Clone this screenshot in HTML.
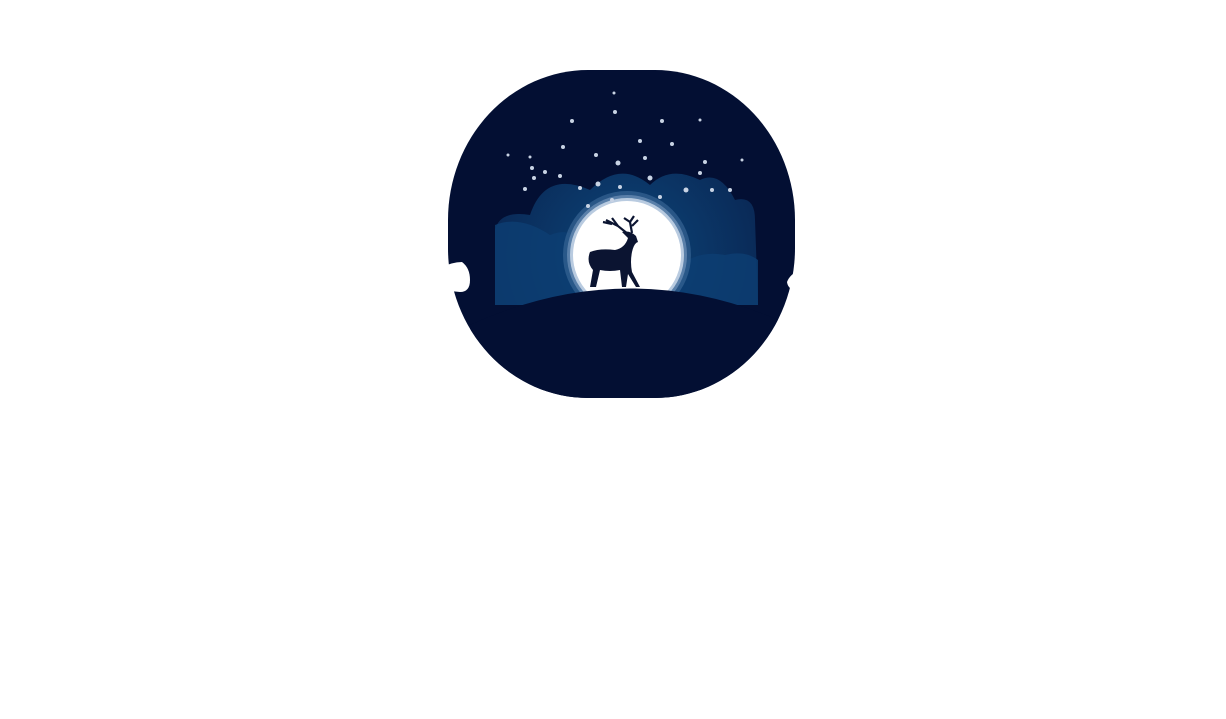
<!DOCTYPE html>
<html><head><style>html,body{margin:0;background:#fff;width:1226px;height:719px;overflow:hidden}</style></head>
<body>
<svg width="1226" height="719" viewBox="0 0 1226 719" style="position:absolute;left:0;top:0">
<defs>
<radialGradient id="cl" cx="627" cy="255" r="140" gradientUnits="userSpaceOnUse">
<stop offset="0" stop-color="#0e4f86"/><stop offset="1" stop-color="#0b2d5c"/></radialGradient>
<clipPath id="c"><rect x="448" y="70" width="347" height="328" rx="140" ry="150"/></clipPath>
</defs>
<rect x="448" y="70" width="347" height="328" rx="140" ry="150" fill="#030f33"/>
<g clip-path="url(#c)">
<path d="M495 305 L495 230 Q500 210 530 215 Q545 170 590 190 Q620 160 650 185 Q670 165 700 180 Q720 170 735 200 Q755 195 755 220 L758 305 Z" fill="url(#cl)" opacity="0.85"/>
<path d="M495 305 L495 225 Q520 215 550 235 Q575 225 585 250 L585 305 Z" fill="#0c3f73" opacity="0.8"/>
<path d="M680 305 L680 265 Q700 250 725 255 Q745 250 758 260 L758 305 Z" fill="#0c3f73" opacity="0.8"/>
<circle cx="627" cy="255" r="64" fill="#3d6a99" opacity="0.6"/>
<circle cx="627" cy="255" r="60" fill="#6f92b8" opacity="0.7"/>
<circle cx="627" cy="255" r="57" fill="#b9cbe0"/>
<circle cx="627" cy="255" r="54" fill="#fff"/>
<path d="M470 325 Q630 252 790 325 L790 400 L470 400 Z" fill="#030f33"/>
<path d="M590 287 L593 270 Q586 262 590 252 Q600 248 615 250 Q625 248 628 238 L622 232 Q630 230 636 236 L638 242 Q634 243 632 252 Q630 262 632 272 L640 287 L636 287 L628 274 L626 287 L622 287 L620 270 Q610 272 600 270 L596 287 Z" fill="#0b1431"/>
<path d="M628 234 L618 226 L606 220 M618 226 L612 218 M612 224 L603 222 M632 233 L630 222 L634 216 M630 222 L624 218 M632 226 L638 220" stroke="#0b1431" stroke-width="2.2" fill="none"/>
<g fill="#c8d3e4">
<circle cx="572" cy="121" r="2"/><circle cx="615" cy="112" r="2"/><circle cx="662" cy="121" r="2"/><circle cx="563" cy="147" r="2"/><circle cx="596" cy="155" r="2"/><circle cx="618" cy="163" r="2.5"/><circle cx="640" cy="141" r="2"/><circle cx="672" cy="144" r="2"/><circle cx="532" cy="168" r="2"/><circle cx="545" cy="172" r="2"/><circle cx="560" cy="176" r="2"/><circle cx="580" cy="188" r="2"/><circle cx="598" cy="184" r="2.5"/><circle cx="620" cy="187" r="2"/><circle cx="650" cy="178" r="2.5"/><circle cx="686" cy="190" r="2.5"/><circle cx="700" cy="173" r="2"/><circle cx="712" cy="190" r="2"/><circle cx="730" cy="190" r="2"/><circle cx="534" cy="178" r="2"/><circle cx="525" cy="189" r="2"/><circle cx="612" cy="200" r="2"/><circle cx="660" cy="197" r="2"/><circle cx="588" cy="206" r="2"/><circle cx="705" cy="162" r="2"/><circle cx="742" cy="160" r="1.5"/><circle cx="530" cy="157" r="1.5"/><circle cx="645" cy="158" r="2"/><circle cx="508" cy="155" r="1.5"/><circle cx="614" cy="93" r="1.5"/><circle cx="700" cy="120" r="1.5"/></g>
</g>
<path d="M440 290 L440 268 Q452 262 462 262 Q470 268 470 280 Q470 292 460 292 Z" fill="#fff"/>
<path d="M800 290 L800 270 Q790 274 787 282 Q788 290 798 291 Z" fill="#fff"/>
</svg>
</body></html>
